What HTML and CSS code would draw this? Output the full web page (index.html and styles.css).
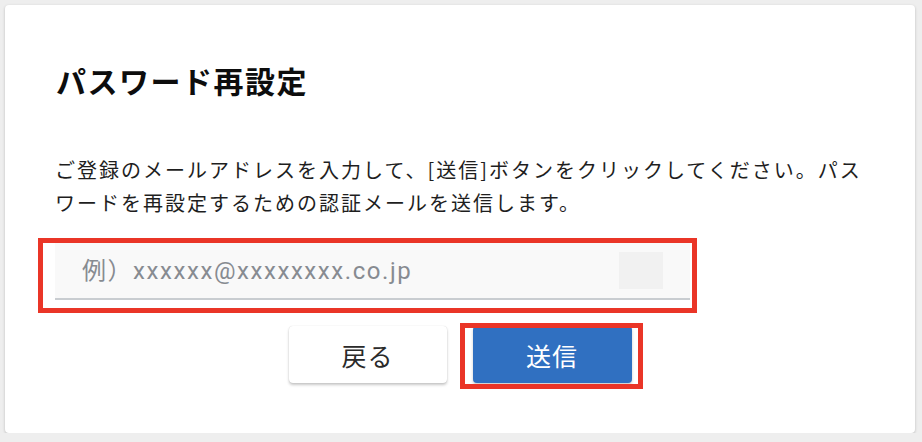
FILE: index.html
```html
<!DOCTYPE html>
<html lang="ja">
<head>
<meta charset="utf-8">
<title>パスワード再設定</title>
<link rel="stylesheet" href="styles.css">
</head>
<body>
<main class="card">
  <h1 class="title">パスワード再設定</h1>
  <p class="lead">ご登録のメールアドレスを入力して、[送信]ボタンをクリックしてください。パスワードを再設定するための認証メールを送信します。</p>
  <div class="field-wrap">
    <div class="field">
      <input class="field-input" type="email" placeholder="例）xxxxxx@xxxxxxxx.co.jp">
      <span class="autofill"></span>
    </div>
    <span class="mark mark-field"></span>
  </div>
  <div class="actions">
    <button class="btn btn-back" type="button">戻る</button>
    <div class="send-wrap">
      <button class="btn btn-send" type="submit">送信</button>
      <span class="mark mark-send"></span>
    </div>
  </div>
</main>
</body>
</html>
```

FILE: styles.css
```css
html, body {
  margin: 0;
  padding: 0;
  background: #eeeeee;
}
body {
  padding: 5px 0 0 5px;
  font-family: "Noto Sans CJK JP", "Noto Sans", sans-serif;
  color: #1c1c1c;
}
.card {
  box-sizing: border-box;
  width: 910px;
  height: 428px;
  background: #ffffff;
  border-radius: 4px;
  box-shadow: 0 1px 3px rgba(0, 0, 0, 0.22);
  padding: 55px 44px 50px 50px;
}
.title {
  margin: 0 0 54px 1px;
  font-size: 30px;
  line-height: 40px;
  font-weight: 700;
  letter-spacing: 0.05em;
  color: #0d0d0d;
}
.lead {
  margin: 0 0 24px 0;
  font-size: 20px;
  line-height: 32.5px;
  letter-spacing: 0.1em;
  color: #1e1e1e;
}
.field-wrap {
  position: relative;
  width: 635px;
}
.field {
  display: flex;
  align-items: center;
  height: 55px;
  background: #f9f9f9;
  border-bottom: 2px solid #c9cdd1;
  padding: 0 27px 0 27px;
}
.field-input {
  flex: 1;
  min-width: 0;
  border: none;
  outline: none;
  background: transparent;
  padding: 0;
  margin: 0;
  font-family: Roboto, "Noto Sans CJK JP", sans-serif;
  font-size: 24px;
  letter-spacing: 0.065em;
  color: #333333;
}
.field-input::placeholder {
  color: #878b91;
  opacity: 1;
}
.autofill {
  width: 44px;
  height: 37px;
  background: #f1f1f1;
  flex: none;
}
.mark {
  position: absolute;
  border: 5px solid #ea3527;
  pointer-events: none;
}
.mark-field {
  left: -17px;
  right: -7px;
  top: -5px;
  bottom: -13px;
}
.actions {
  display: flex;
  justify-content: center;
  gap: 26px;
  margin-top: 26px;
  margin-right: 6px;
}
.btn {
  width: 158px;
  height: 57px;
  border: none;
  border-radius: 4px;
  font-family: "Noto Sans CJK JP", sans-serif;
  font-size: 25px;
  letter-spacing: 0.04em;
  cursor: pointer;
}
.btn-back {
  background: #ffffff;
  color: #2a2a2a;
  box-shadow: 0 2px 3px rgba(0, 0, 0, 0.22), 0 0 1px rgba(0, 0, 0, 0.18);
}
.send-wrap {
  position: relative;
  display: flex;
}
.btn-send {
  width: 159px;
  background: #3070c1;
  color: #ffffff;
  box-shadow: 0 2px 3px rgba(0, 0, 0, 0.2);
}
.mark-send {
  left: -13px;
  right: -11px;
  top: -3px;
  bottom: -6px;
}
```
